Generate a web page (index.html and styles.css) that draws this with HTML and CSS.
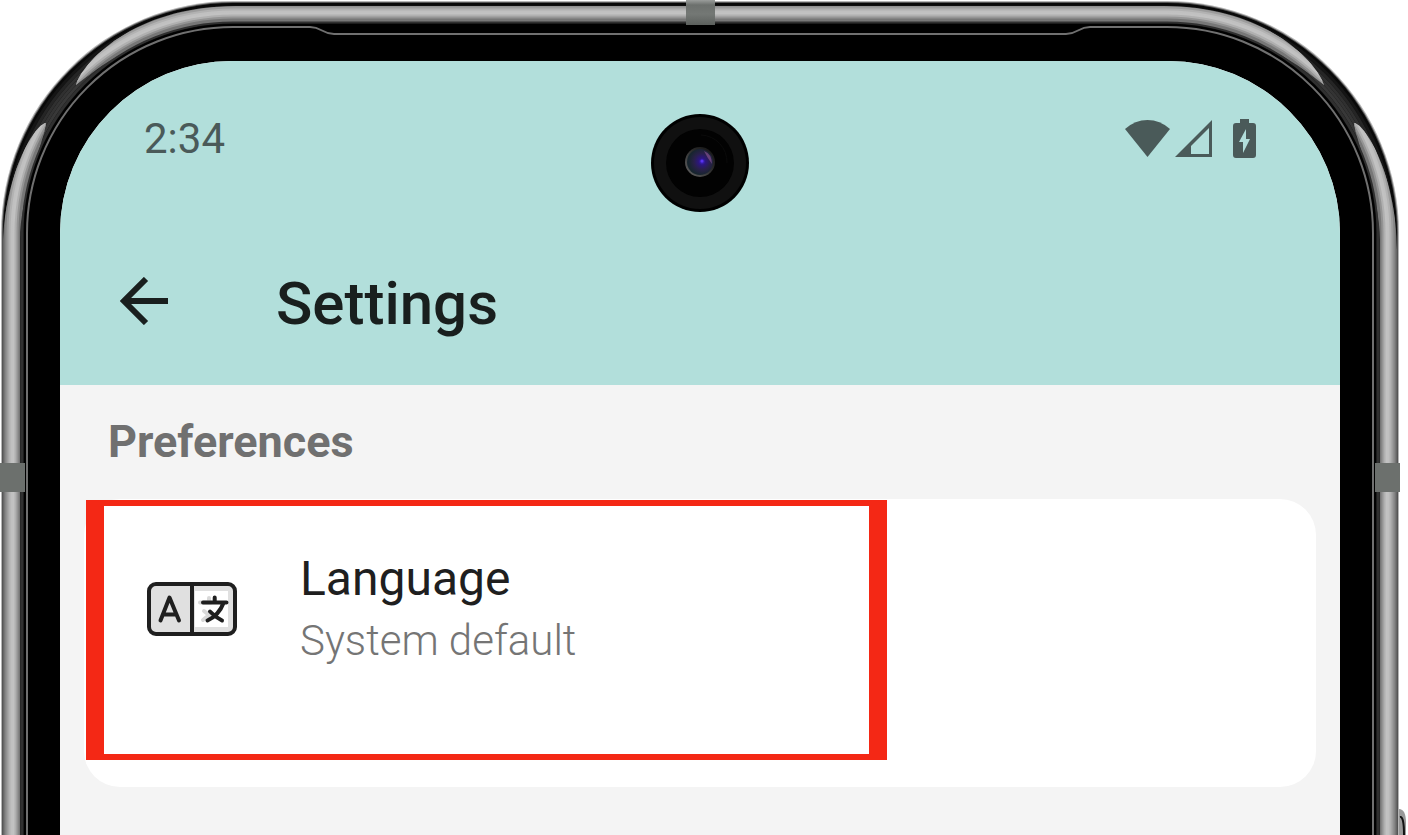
FILE: index.html
```html
<!DOCTYPE html>
<html lang="en">
<head>
  <meta charset="UTF-8">
  <meta name="viewport" content="width=device-width, initial-scale=1">
  <title>Settings</title>
  <link rel="stylesheet" href="styles.css">
</head>
<body>
  <div class="phone">
    <!-- Phone body: one half, drawn twice and mirrored -->
    <svg class="frame frame-left" aria-hidden="true">
      <defs>
        <clipPath id="shine">
          <path d="M76 85C82 64 132 6 236 6H4000V22H236C172 24 122 48 76 85Z"/>
          <path d="M46 123C34 124 3 178 3 250V4000H20V240C20 196 44 142 46 123Z"/>
        </clipPath>
        <g id="half">
          <rect x="1" y="1" width="4000" height="4000" rx="232" fill="#b5b5b5"/>
          <rect x="2" y="2" width="4000" height="4000" rx="231" fill="#555"/>
          <rect x="3" y="3" width="4000" height="4000" rx="230" fill="#080808"/>
          <g fill="none" stroke-width="3">
            <rect x="7" y="7" width="4000" height="4000" rx="226" stroke="#151515"/>
            <rect x="10" y="10" width="4000" height="4000" rx="223" stroke="#252525"/>
            <rect x="13" y="13" width="4000" height="4000" rx="220" stroke="#303030"/>
            <rect x="16" y="16" width="4000" height="4000" rx="217" stroke="#343434"/>
            <rect x="19" y="19" width="4000" height="4000" rx="214" stroke="#383838"/>
            <rect x="22" y="22" width="4000" height="4000" rx="211" stroke="#303030"/>
          </g>
          <g fill="none" stroke-width="3" clip-path="url(#shine)">
            <rect x="4" y="4" width="4000" height="4000" rx="229" stroke="#666"/>
            <rect x="6" y="6" width="4000" height="4000" rx="227" stroke="#858585"/>
            <rect x="8" y="8" width="4000" height="4000" rx="225" stroke="#9c9c9c"/>
            <rect x="10" y="10" width="4000" height="4000" rx="223" stroke="#b2b2b2"/>
            <rect x="12" y="12" width="4000" height="4000" rx="221" stroke="#c0c0c0"/>
            <rect x="14" y="14" width="4000" height="4000" rx="219" stroke="#c2c2c2"/>
            <rect x="16" y="16" width="4000" height="4000" rx="217" stroke="#b0b0b0"/>
            <rect x="18" y="18" width="4000" height="4000" rx="215" stroke="#949494"/>
            <rect x="20" y="20" width="4000" height="4000" rx="213" stroke="#777"/>
          </g>
          <rect x="24" y="24" width="4000" height="4000" rx="209"/>
          <path d="M4000 34H334C322 34 322 27 310 27H233A206 206 0 0 0 27 233V4000" fill="none" stroke="#707070" stroke-width="2"/>
          <rect class="band" x="0" y="463" width="25" height="29"/>
        </g>
      </defs>
      <use href="#half"/>
    </svg>
    <svg class="frame frame-right" aria-hidden="true"><use href="#half"/></svg>
    <span class="antenna"></span>
    <svg class="power-key" viewBox="0 0 8 26" aria-hidden="true">
      <path d="M0 0Q7 0 7 14V26H0Z" fill="#999"/>
      <path d="M1 8Q5 7 5 26" fill="none" stroke="#111" stroke-width="2"/>
    </svg>

    <div class="screen">
      <div class="status-bar">
        <span class="clock">2:34</span>
        <div class="status-icons">
          <svg width="46" height="40" viewBox="0 0 46 40">
            <path d="M0 10Q10 1 22.500 1T45 10L22.500 38Z"/>
          </svg>
          <svg width="38" height="40" viewBox="0 0 38 40">
            <path fill-rule="evenodd" d="M37 1V38H0ZM34 9L16 27V35H34Z"/>
          </svg>
          <svg class="battery" width="23" height="40" viewBox="0 0 23 40">
            <path fill-rule="evenodd" d="M7 0H16V4H20Q23 4 23 7V36Q23 39 20 39H3Q0 39 0 36V7Q0 4 3 4H7ZM13 10L6 23H10V34L17 20H13Z"/>
          </svg>
        </div>
        <svg class="camera" viewBox="0 0 98 98" aria-hidden="true">
          <defs>
            <radialGradient id="lens" cx="58%" cy="48%" r="52%">
              <stop offset="0" stop-color="#4426d8"/>
              <stop offset=".25" stop-color="#2c1680"/>
              <stop offset=".6" stop-color="#29204a"/>
              <stop offset="1" stop-color="#17252e"/>
            </radialGradient>
            <linearGradient id="rim" x1="0" y1="1" x2="1" y2="0">
              <stop offset="0" stop-color="#666"/>
              <stop offset=".6" stop-color="#292929"/>
              <stop offset="1" stop-color="#111"/>
            </linearGradient>
          </defs>
          <circle cx="49" cy="49" r="49"/>
          <circle cx="49" cy="49" r="46" fill="#101010"/>
          <circle cx="49" cy="49" r="34" fill="#020202"/>
          <path d="M50 21A27 27 0 0 1 76 49" fill="none" stroke="#0a0a0a"/>
          <circle cx="49" cy="48" r="15" fill="url(#rim)"/>
          <circle cx="49" cy="48" r="13" fill="url(#lens)"/>
          <path d="M53 37Q61 40 61 50Q57 45 53 37Z" fill="#81518f" opacity=".7"/>
          <circle cx="51" cy="47" r="1.500" fill="#5a34f0"/>
        </svg>
      </div>

      <header class="app-bar">
        <button class="back" type="button" aria-label="Back">
          <svg width="48" height="48" viewBox="0 0 48 48">
            <path d="M48 24H5M26 2L4 24L26 46" fill="none" stroke="#191f1e" stroke-width="6"/>
          </svg>
        </button>
        <h1>Settings</h1>
      </header>

      <main>
        <h2>Preferences</h2>
        <div class="card">
          <a class="row" href="#language">
            <svg width="90" height="54" viewBox="0 0 90 54" aria-hidden="true">
              <rect x="2" y="2" width="86" height="50" rx="7" fill="#e0e0e0"/>
              <rect x="48" y="9" width="33" height="36" fill="#fff"/>
              <g fill="none" stroke-width="4" stroke-linecap="round" stroke-linejoin="round">
                <path d="M53 20.500H64M62 16V20M57 29L62 33L56 38" stroke="#d8d8d8"/>
                <g stroke="#1f1f1f">
                  <rect x="2" y="2" width="86" height="50" rx="7"/>
                  <path d="M45 2V52"/>
                  <path d="M13.500 38.500L22.500 15.500L32 38.500M17 32.500H28"/>
                  <path d="M56 20.500H79.500M67.700 15.500V20M76.500 21Q72 33 60.500 38.500M63 29.500Q68 35 75 38.500"/>
                </g>
              </g>
            </svg>
            <span class="row-text">
              <span class="row-title">Language</span>
              <span class="row-value">System default</span>
            </span>
          </a>
        </div>
      </main>
    </div>
  </div>
</body>
</html>
```
FILE: styles.css
```css
* {
  box-sizing: border-box;
}

body {
  margin: 0;
  background: #fff;
  font-family: Roboto, "Liberation Sans", sans-serif;
}

.phone {
  position: relative;
  display: flex;
  min-height: 100vh;
  margin-right: 8px;
  padding: 61px 60px 0;
}

/* phone body */
.frame {
  position: absolute;
  top: 0;
  width: 50%;
  height: 100%;
}

.frame-left {
  left: 0;
}

.frame-right {
  right: 0;
  transform: scaleX(-1);
}

.band {
  fill: #6c706d;
}

.antenna {
  position: absolute;
  top: 0;
  left: 50%;
  width: 29px;
  height: 25px;
  margin-left: -14px;
  background: linear-gradient(#9a9d9b, #6c706d 5px, #747875 14px, #5c605d);
}

.power-key {
  position: absolute;
  right: -7px;
  bottom: 0;
  width: 8px;
  height: 26px;
}

/* screen */
.screen {
  position: relative;
  flex: 1;
  overflow: hidden;
  border-radius: 172px 172px 0 0;
  background: #f4f4f4;
}

.status-bar {
  position: relative;
  display: flex;
  align-items: center;
  justify-content: space-between;
  height: 156px;
  padding: 0 84px;
  background: #b2dfdb;
  color: #4a5a59;
}

.clock {
  font-size: 42px;
  line-height: 48px;
}

.status-icons {
  display: flex;
  gap: 4px;
  fill: #4a5a59;
}

.battery {
  margin-left: 16px;
}

.camera {
  position: absolute;
  top: 53px;
  left: 50%;
  width: 98px;
  height: 98px;
  margin-left: -49px;
}

.app-bar {
  display: flex;
  align-items: center;
  gap: 108px;
  height: 168px;
  padding: 0 60px;
  background: #b2dfdb;
  color: #191f1e;
}

.back {
  display: flex;
  padding: 0;
  border: 0;
  background: none;
  cursor: pointer;
}

h1 {
  margin: 0;
  padding-top: 6px;
  font-size: 60px;
  font-weight: 500;
  line-height: 72px;
}

main {
  padding: 30px 24px;
}

h2 {
  margin: 0 24px 30px;
  color: #707070;
  font-size: 45px;
  font-weight: 700;
  line-height: 54px;
}

.card {
  padding: 1px 0 27px;
  border-radius: 36px;
  background: #fff;
}

.row {
  display: flex;
  align-items: center;
  gap: 63px;
  width: 65%;
  height: 260px;
  margin-left: 2px;
  padding: 0 43px 42px;
  border: solid #f42815;
  border-width: 6px 18px;
  color: #1f1f1f;
  text-decoration: none;
}

.row-text {
  display: flex;
  flex-direction: column;
}

.row-title {
  font-size: 48px;
  line-height: 64px;
}

.row-value {
  color: #757575;
  font-size: 42px;
  font-weight: 300;
  line-height: 60px;
}
```
